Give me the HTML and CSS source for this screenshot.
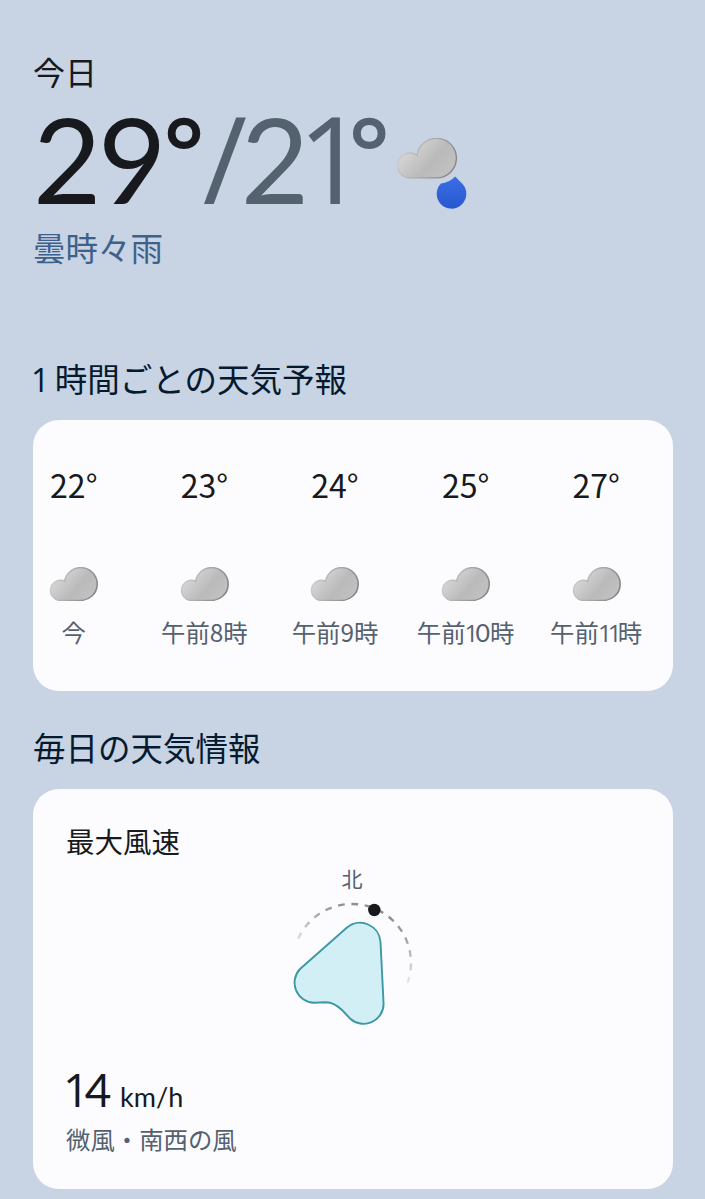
FILE: index.html
```html
<!DOCTYPE html>
<html lang="ja">
<head>
  <meta charset="UTF-8" />
  <meta name="viewport" content="width=device-width, initial-scale=1.0" />
  <title>天気予報</title>
  <link rel="stylesheet" href="styles.css">
</head>
<body>
  <svg class="defs" width="0" height="0" aria-hidden="true">
    <defs>
      <linearGradient id="cloudFill" x1="0" y1="0.2" x2="1" y2="0.8">
        <stop offset="0" stop-color="#dedede"/>
        <stop offset="0.6" stop-color="#bababa"/>
        <stop offset="1" stop-color="#c2c2c2"/>
      </linearGradient>
      <linearGradient id="cloudEdge" x1="0" y1="0.2" x2="1" y2="0.5">
        <stop offset="0" stop-color="#d2d2d2"/>
        <stop offset="1" stop-color="#858585"/>
      </linearGradient>
      <symbol id="cloud" viewBox="0 0 49 34">
        <path d="M11 33.4A10 10 0 1 1 15.6 14.3A16.4 16.4 0 1 1 31.5 33.4Z" fill="url(#cloudFill)" stroke="url(#cloudEdge)" stroke-width="1.5"/>
      </symbol>
    </defs>
  </svg>

  <section class="today">
    <p class="today-label">今日</p>
    <div class="today-row">
      <div class="today-temp"><span class="high">29<span class="deg">°</span></span><span class="low"><span class="slash">/</span>2<span class="one">1</span><span class="deg">°</span></span></div>
      <svg class="today-icon" width="72" height="72" viewBox="0 0 72 72">
        <defs>
          <linearGradient id="dropFill" x1="0" y1="0" x2="0" y2="1">
            <stop offset="0" stop-color="#3a6fe6"/>
            <stop offset="1" stop-color="#2857cf"/>
          </linearGradient>
        </defs>
        <path d="M13.3 39.9A12.4 12.4 0 1 1 20 17.3A19.8 19.8 0 1 1 39.6 39.9Z" fill="url(#cloudFill)" stroke="url(#cloudEdge)" stroke-width="1.4"/>
        <path d="M58.2 38.5L66 46.5A14.8 14.8 0 1 1 44 45.4Q52 45 58.2 38.5Z" fill="url(#dropFill)"/>
      </svg>
    </div>
    <p class="today-desc">曇時々雨</p>
  </section>

  <section class="hourly">
    <h2><span class="num">1</span> 時間ごとの天気予報</h2>
    <div class="card hourly-card">
      <div class="hour">
        <span class="hour-temp">22°</span>
        <svg class="hour-icon"><use href="#cloud"/></svg>
        <span class="hour-time">今</span>
      </div>
      <div class="hour">
        <span class="hour-temp">23°</span>
        <svg class="hour-icon"><use href="#cloud"/></svg>
        <span class="hour-time">午前8時</span>
      </div>
      <div class="hour">
        <span class="hour-temp">24°</span>
        <svg class="hour-icon"><use href="#cloud"/></svg>
        <span class="hour-time">午前9時</span>
      </div>
      <div class="hour">
        <span class="hour-temp">25°</span>
        <svg class="hour-icon"><use href="#cloud"/></svg>
        <span class="hour-time">午前<span class="num">1</span><span class="zero">0</span>時</span>
      </div>
      <div class="hour">
        <span class="hour-temp">27°</span>
        <svg class="hour-icon"><use href="#cloud"/></svg>
        <span class="hour-time">午前<span class="num">11</span>時</span>
      </div>
    </div>
  </section>

  <section class="daily">
    <h2>毎日の天気情報</h2>
    <div class="card wind-card">
      <h3>最大風速</h3>
      <div class="compass">
        <span class="north">北</span>
        <svg class="compass-dial" width="144" height="132" viewBox="0 38 144 132">
          <defs>
            <linearGradient id="dialFade" gradientUnits="userSpaceOnUse" x1="46" y1="150" x2="80" y2="44">
              <stop offset="0.35" stop-color="#8e9093" stop-opacity="0"/>
              <stop offset="0.95" stop-color="#8e9093"/>
            </linearGradient>
          </defs>
          <path d="M18.2 78.7A59 59 0 0 1 127.4 123.2" fill="none" stroke="url(#dialFade)" stroke-width="2.4" stroke-dasharray="6.7 6.69"/>
          <circle cx="94.3" cy="50" r="6.2" fill="#17191c"/>
          <path d="M20 109L67 67.5A20.5 20.5 0 0 1 100.5 82L103.6 144A20 20 0 0 1 70 158.5L62 150C56 144.5 52 142.3 46 142.3L34 142.7A20 20 0 0 1 20 109Z" fill="#d2eff6" stroke="#3d98a5" stroke-width="1.9"/>
        </svg>
      </div>
      <div class="wind-speed"><span class="value"><span class="num">1</span>4</span><span class="unit">km/h</span></div>
      <p class="wind-desc">微風・南西の風</p>
    </div>
  </section>
</body>
</html>
```
FILE: styles.css
```css
*,*::before,*::after{box-sizing:border-box;margin:0;padding:0;}
body{background:#c8d3e3;color:#17191c;font-family:"Noto Sans CJK JP","Noto Sans",sans-serif;padding:51px 32px 10px 33px;}
h2,h3{font-weight:400;}
h2{font-size:32.5px;line-height:40px;color:#061a2f;}
.defs{position:absolute;}
.num,.slash,.one,.deg{font-family:"Open Sans",sans-serif;line-height:0;}

.today-label{font-size:32px;line-height:40px;}
.today-row{display:flex;height:134px;}
.today-temp{font-family:Lato,sans-serif;font-size:118px;line-height:136px;letter-spacing:-3.5px;white-space:nowrap;width:364px;}
.low{color:#54616f;}
.slash{margin-left:-2px;font-size:121px;letter-spacing:-6.5px;}
.one{font-size:120px;margin-left:-8px;letter-spacing:-18px;}
.deg{font-size:98px;font-weight:600;vertical-align:15px;letter-spacing:0;}
.today-icon{display:block;margin-top:47px;}
.today-desc{font-size:32.5px;line-height:40px;color:#3d618b;margin-top:2px;}

.hourly{margin-top:91px;}
h2 .num{margin-left:-2px;letter-spacing:-2px;}
.card{background:#fcfcff;border-radius:26px;overflow:hidden;}
.hourly-card{display:flex;height:271px;margin-top:22px;padding-top:41px;}
.hour{flex:0 0 130.6px;display:flex;flex-direction:column;align-items:center;}
.hour:first-child{margin-left:-24.5px;}
.hour-temp{font-size:32px;line-height:46px;}
.hour-icon{width:49px;height:34px;margin-top:60px;}
.hour-time{font-size:24.4px;line-height:36px;margin-top:13px;color:#54616f;}
.hour-time .num{letter-spacing:-4px;margin-left:-1px;}
.zero{font-family:Lato,sans-serif;font-size:25px;line-height:0;margin-left:1px;}

.daily{margin-top:36px;}
.wind-card{height:400px;margin-top:22px;padding:32px 34px 0 33px;}
.wind-card h3{font-size:28.5px;line-height:40px;}
.compass{display:flex;flex-direction:column;align-items:center;margin-left:-1px;}
.north{font-size:21px;line-height:30px;color:#54616f;margin-top:2px;}
.compass-dial{display:block;margin-top:5px;}
.wind-speed{display:flex;align-items:baseline;font-family:Lato,sans-serif;line-height:56px;margin-top:32px;}
.value{font-size:46px;letter-spacing:-1px;}
.value .num{letter-spacing:-4.5px;margin-left:-3px;}
.unit{font-size:27px;margin-left:9.5px;}
.wind-desc{font-size:24.4px;line-height:36px;margin-top:-4px;color:#54616f;}
```
